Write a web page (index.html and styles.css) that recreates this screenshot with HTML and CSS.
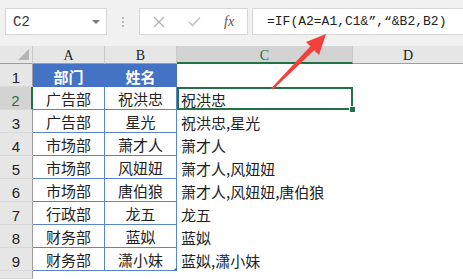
FILE: index.html
```html
<!DOCTYPE html>
<html lang="zh">
<head>
  <meta charset="UTF-8" />
  <title>合并姓名</title>
  <link rel="stylesheet" href="styles.css">
</head>
<body>
  <div class="toolbar">
    <div class="namebox">C2<span class="drop"></span></div>
    <div class="dots"><i></i><i></i><i></i></div>
    <div class="fxbox">
      <svg class="ico" width="12" height="12" viewBox="0 0 12 12"><path d="M1 1L11 11M11 1L1 11" stroke="#b4b4b4" stroke-width="1.4" fill="none"/></svg>
      <svg class="ico" width="13" height="11" viewBox="0 0 13 11"><path d="M1 6L4.5 9.5L12 1.5" stroke="#c4c4c4" stroke-width="1.6" fill="none"/></svg>
      <span class="fx">fx</span>
    </div>
    <div class="formula">=IF(A2=A1,C1&amp;”,“&amp;B2,B2)</div>
  </div>

  <div class="sheet">
    <div class="hd corner"><span class="tri"></span></div>
    <div class="hd col">A</div>
    <div class="hd col">B</div>
    <div class="hd col cur">C</div>
    <div class="hd col last">D</div>

    <div class="hd row">1</div>
    <div class="cell th">部门</div>
    <div class="cell th">姓名</div>
    <div class="cell c"></div>
    <div class="cell d"></div>

    <div class="hd row cur">2</div>
    <div class="cell t">广告部</div>
    <div class="cell t">祝洪忠</div>
    <div class="cell c sel">祝洪忠</div>
    <div class="cell d"></div>

    <div class="hd row">3</div>
    <div class="cell t">广告部</div>
    <div class="cell t">星光</div>
    <div class="cell c">祝洪忠,星光</div>
    <div class="cell d"></div>

    <div class="hd row">4</div>
    <div class="cell t">市场部</div>
    <div class="cell t">萧才人</div>
    <div class="cell c">萧才人</div>
    <div class="cell d"></div>

    <div class="hd row">5</div>
    <div class="cell t">市场部</div>
    <div class="cell t">风妞妞</div>
    <div class="cell c">萧才人,风妞妞</div>
    <div class="cell d"></div>

    <div class="hd row">6</div>
    <div class="cell t">市场部</div>
    <div class="cell t">唐伯狼</div>
    <div class="cell c">萧才人,风妞妞,唐伯狼</div>
    <div class="cell d"></div>

    <div class="hd row">7</div>
    <div class="cell t">行政部</div>
    <div class="cell t">龙五</div>
    <div class="cell c">龙五</div>
    <div class="cell d"></div>

    <div class="hd row">8</div>
    <div class="cell t">财务部</div>
    <div class="cell t">蓝姒</div>
    <div class="cell c">蓝姒</div>
    <div class="cell d"></div>

    <div class="hd row">9</div>
    <div class="cell t">财务部</div>
    <div class="cell t end">潇小妹</div>
    <div class="cell c">蓝姒,潇小妹</div>
    <div class="cell d"></div>

    <div class="hd row"></div>
    <div class="cell"></div>
    <div class="cell"></div>
    <div class="cell c"></div>
    <div class="cell d"></div>
  </div>

  <svg class="arrow" width="463" height="279" viewBox="0 0 463 279">
    <path d="M271 88.5L273 89.5L316 48.5L312 44.5Z" fill="#f2413a"/>
    <path d="M326 34L306 42L319 55Z" fill="#f2413a"/>
  </svg>
</body>
</html>
```

FILE: styles.css
```css
body {
  margin: 0;
  width: 463px;
  height: 279px;
  overflow: hidden;
  background: #f1f1f1;
  font-family: "Noto Sans CJK SC", "Noto Sans", sans-serif;
  position: relative;
}
.toolbar {
  display: flex;
  align-items: center;
  height: 46px;
  padding: 0 0 0 5px;
  box-sizing: border-box;
  padding-bottom: 11px;
  padding-top: 8px;
}
.namebox {
  width: 102px;
  height: 27px;
  box-sizing: border-box;
  background: #fff;
  border: 1px solid #d6d6d6;
  display: flex;
  align-items: center;
  padding-left: 7px;
  font-family: "Liberation Mono", monospace;
  font-size: 14px;
  color: #333;
  position: relative;
}
.drop {
  position: absolute;
  right: 6px;
  top: 11px;
  border-left: 4px solid transparent;
  border-right: 4px solid transparent;
  border-top: 4px solid #777;
}
.dots {
  width: 32px;
  display: flex;
  flex-direction: column;
  align-items: center;
  gap: 2px;
}
.dots i {
  width: 2px;
  height: 2px;
  background: #b8b8b8;
}
.fxbox {
  width: 109px;
  height: 27px;
  box-sizing: border-box;
  background: #fff;
  border: 1px solid #d6d6d6;
  display: flex;
  align-items: center;
  padding-left: 13px;
  gap: 23px;
}
.fx {
  font-family: "Liberation Serif", serif;
  font-style: italic;
  font-size: 14px;
  color: #555;
}
.formula {
  flex: 1;
  margin-left: 4px;
  height: 27px;
  box-sizing: border-box;
  background: #fff;
  border: 1px solid #d6d6d6;
  border-right: none;
  display: flex;
  align-items: center;
  padding-left: 14px;
  font-family: "Liberation Mono", monospace;
  font-size: 13px;
  color: #222;
}
.sheet {
  display: grid;
  grid-template-columns: 33px 72px 72px 176px 110px;
  grid-template-rows: 18px repeat(9, 23px) 8px;
  background: #fff;
}
.hd {
  background: #e6e6e6;
  box-sizing: border-box;
  border-right: 1px solid #c9c9c9;
  border-bottom: 1px solid #c9c9c9;
  display: flex;
  align-items: center;
  justify-content: center;
  color: #222;
}
.col {
  font-family: "Liberation Serif", serif;
  font-size: 14px;
  padding-top: 3px;
  border-bottom-color: #9e9e9e;
}
.col.last {
  border-right: none;
}
.col.cur {
  background: #d3d3d3;
  color: #217346;
  border-bottom: 2px solid #217346;
}
.corner {
  position: relative;
  border-bottom-color: #9e9e9e;
}
.tri {
  position: absolute;
  right: 3px;
  bottom: 3px;
  border-left: 11px solid transparent;
  border-bottom: 11px solid #b5b5b5;
}
.row {
  font-family: "Liberation Sans", sans-serif;
  font-size: 15px;
  padding-top: 4px;
  border-right-color: #9e9e9e;
  border-bottom-color: #d8d8d8;
}
.row.cur {
  background: #d3d3d3;
  color: #217346;
  border-right: 2px solid #217346;
}
.cell {
  box-sizing: border-box;
  display: flex;
  align-items: center;
  font-size: 15px;
  color: #222;
  padding-top: 1px;
}
.th {
  justify-content: center;
  background: #4472c4;
  color: #fff;
  font-weight: bold;
  border-right: 1px solid #4472c4;
}
.t {
  justify-content: center;
  border-right: 1px solid #5a86c8;
  border-bottom: 1px solid #5a86c8;
}
.t.end {
  position: relative;
}
.t.end::after {
  content: "";
  position: absolute;
  right: -1px;
  bottom: -1px;
  border-left: 4px solid transparent;
  border-bottom: 4px solid #3f6fbf;
}
.c {
  padding-left: 4px;
}
.sel {
  position: relative;
  box-shadow: inset 0 0 0 2px #217346;
}
.sel::after {
  content: "";
  position: absolute;
  right: -3px;
  bottom: -3px;
  width: 5px;
  height: 5px;
  background: #217346;
  border: 1px solid #fff;
}
.arrow {
  position: absolute;
  left: 0;
  top: 0;
  pointer-events: none;
}
```
